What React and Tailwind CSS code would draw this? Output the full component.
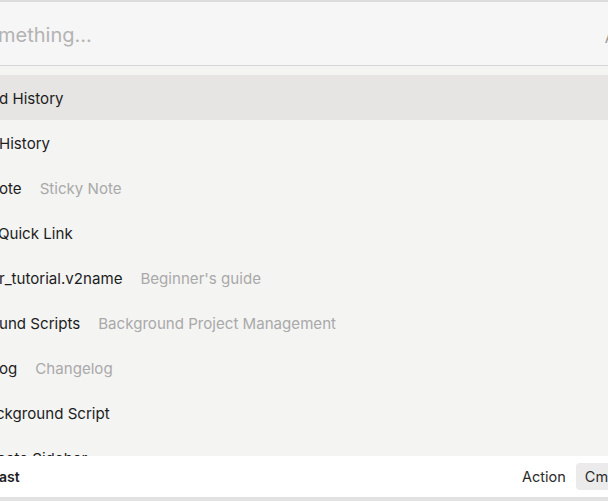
const rows = [
  { title: 'd History', shift: 'ml-[-1px]', selected: true },
  { title: 'History', shift: 'ml-[-1px]' },
  { title: 'ote', sub: 'Sticky Note', shift: 'ml-[-1px]' },
  { title: 'Quick Link', shift: 'ml-[-2px]' },
  { title: 'r_tutorial.v2name', sub: "Beginner's guide", shift: 'ml-[-1px]' },
  { title: 'und Scripts', sub: 'Background Project Management', shift: 'ml-[-1px]' },
  { title: 'og', sub: 'Changelog', shift: 'ml-[-1px]' },
  { title: 'ckground Script', shift: 'ml-[-4px]' },
  { title: 'eate Sidebar', shift: 'ml-[-3px]' },
]

function Row({ title, sub, shift, selected }) {
  return (
    <div className={`flex h-[45px] shrink-0 items-center whitespace-nowrap pt-[3px] ${selected ? 'bg-[#e6e5e3]' : ''}`}>
      <span className={`${shift} text-[15.1px] text-[#1d1d1d]`}>{title}</span>
      {sub ? <span className="ml-[18px] text-[15.1px] text-[#a9a9a9]">{sub}</span> : null}
    </div>
  )
}

export default function App() {
  return (
    <div
      className="flex h-[501px] w-[608px] flex-col overflow-hidden bg-[#f4f4f3]"
      style={{ fontFamily: 'Inter, "Noto Sans", sans-serif' }}
    >
      <div className="h-[2px] shrink-0 bg-[#dcdcdc]" />
      <div className="flex h-[64px] shrink-0 items-center justify-between border-b border-[#d6d6d6] bg-[#f6f6f6] pt-[2px]">
        <span className="ml-[-2px] text-[20px] text-[#b3b3b3]">mething...</span>
        <span className="mr-[-7px] pt-[8px] text-[15px] text-[#9a9a9a]">A</span>
      </div>
      <div className="flex flex-1 flex-col overflow-hidden pt-[9px]">
        {rows.map((r) => (
          <Row key={r.title} {...r} />
        ))}
      </div>
      <div className="flex h-[41px] shrink-0 items-center justify-between bg-white">
        <span className="ml-[-1px] text-[14px] font-semibold text-[#1d1d1d]">ast</span>
        <div className="flex items-center gap-[10px]">
          <span className="text-[14.5px] text-[#2a2a2a]">Action</span>
          <span className="mr-[-18px] rounded-[4px] bg-[#ebebeb] px-[9px] py-[3px] text-[14.5px] text-[#2a2a2a]">Cmd</span>
        </div>
      </div>
      <div className="h-[4px] shrink-0 bg-[#e2e2e2]" />
    </div>
  )
}
